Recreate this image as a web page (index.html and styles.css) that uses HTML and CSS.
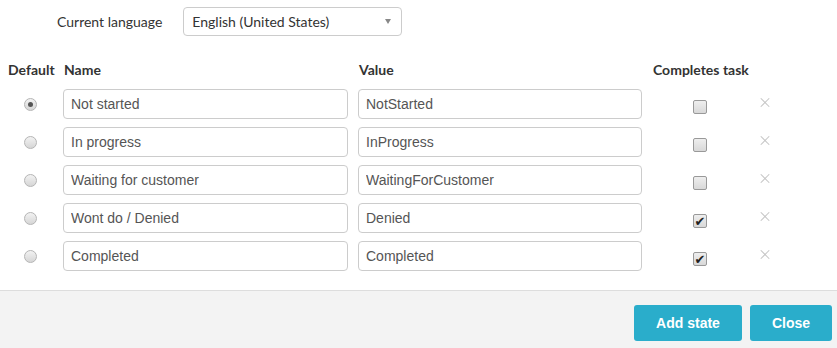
FILE: index.html
```html
<!DOCTYPE html>
<html lang="en">
<head>
    <meta charset="UTF-8">
    <title>Task states</title>
    <link rel="stylesheet" href="styles.css">
</head>
<body>
    <div class="content">
        <div class="language">
            <label class="language-label">Current language</label>
            <div class="select">
                <span>English (United States)</span>
                <span class="caret"></span>
            </div>
        </div>

        <div class="states">
            <div class="head">Default</div>
            <div class="head">Name</div>
            <div class="head">Value</div>
            <div class="head">Completes task</div>
            <div class="head"></div>

            <div class="cell center"><span class="radio checked"></span></div>
            <div class="cell"><input class="field" type="text" value="Not started"></div>
            <div class="cell"><input class="field" type="text" value="NotStarted"></div>
            <div class="cell center"><span class="check"></span></div>
            <div class="cell center"><span class="remove"></span></div>

            <div class="cell center"><span class="radio"></span></div>
            <div class="cell"><input class="field" type="text" value="In progress"></div>
            <div class="cell"><input class="field" type="text" value="InProgress"></div>
            <div class="cell center"><span class="check"></span></div>
            <div class="cell center"><span class="remove"></span></div>

            <div class="cell center"><span class="radio"></span></div>
            <div class="cell"><input class="field" type="text" value="Waiting for customer"></div>
            <div class="cell"><input class="field" type="text" value="WaitingForCustomer"></div>
            <div class="cell center"><span class="check"></span></div>
            <div class="cell center"><span class="remove"></span></div>

            <div class="cell center"><span class="radio"></span></div>
            <div class="cell"><input class="field" type="text" value="Wont do / Denied"></div>
            <div class="cell"><input class="field" type="text" value="Denied"></div>
            <div class="cell center"><span class="check checked">&#10004;</span></div>
            <div class="cell center"><span class="remove"></span></div>

            <div class="cell center"><span class="radio"></span></div>
            <div class="cell"><input class="field" type="text" value="Completed"></div>
            <div class="cell"><input class="field" type="text" value="Completed"></div>
            <div class="cell center"><span class="check checked">&#10004;</span></div>
            <div class="cell center"><span class="remove"></span></div>
        </div>
    </div>

    <div class="footer">
        <button class="btn">Add state</button>
        <button class="btn">Close</button>
    </div>
</body>
</html>
```

FILE: styles.css
```css
body {
    margin: 0;
    background-color: #fff;
    color: #333;
    font-family: 'Lato', sans-serif;
    font-size: 14px;
}
.content {
    padding: 7px 0 11px 8px;
}
.language {
    display: flex;
    align-items: center;
    padding-left: 49px;
    gap: 21px;
}
.select {
    box-sizing: border-box;
    width: 219px;
    height: 29px;
    border: 1px solid #ccc;
    border-radius: 4px;
    padding: 0 9px 0 8px;
    display: flex;
    align-items: center;
    justify-content: space-between;
    color: #333;
}
.caret {
    width: 0;
    height: 0;
    border-left: 3px solid transparent;
    border-right: 3px solid transparent;
    border-top: 5px solid #888;
    margin-right: 1px;
}
.states {
    display: grid;
    grid-template-columns: 55px 295px 294px 94px 36px;
    grid-template-rows: 36px;
    grid-auto-rows: 38px;
    margin-top: 17px;
}
.head {
    font-weight: bold;
    line-height: 34px;
    padding-left: 1px;
    white-space: nowrap;
}
.head:first-child {
    padding-left: 0;
}
.cell {
    display: flex;
    align-items: flex-start;
}
.center {
    justify-content: center;
    padding-top: 9px;
    box-sizing: border-box;
}
.field {
    box-sizing: border-box;
    width: 285px;
    height: 30px;
    margin: 0;
    padding: 0 7px;
    border: 1px solid #ccc;
    border-radius: 4px;
    font-family: 'Liberation Sans', Arial, sans-serif;
    font-size: 14px;
    color: #555;
}
.cell:nth-child(5n+3) .field {
    width: 284px;
}
.radio {
    width: 11px;
    height: 11px;
    border-radius: 50%;
    border: 1px solid #b5b5b5;
    background: linear-gradient(#f2f2f2, #d6d6d6);
    margin-top: 0;
    margin-right: 10px;
    position: relative;
}
.radio.checked::after {
    content: "";
    position: absolute;
    left: 3px;
    top: 3px;
    width: 5px;
    height: 5px;
    border-radius: 50%;
    background: #555;
}
.check {
    width: 12px;
    height: 12px;
    border: 1px solid #999;
    border-radius: 2px;
    background: linear-gradient(#eee, #d8d8d8);
    margin-top: 2px;
    margin-left: 2px;
    font-size: 13px;
    line-height: 13px;
    text-align: center;
    color: #222;
    font-family: 'DejaVu Sans', sans-serif;
    overflow: hidden;
}
.remove {
    width: 9px;
    height: 9px;
    position: relative;
    margin-top: 0;
    margin-left: 1px;
}
.remove::before,
.remove::after {
    content: "";
    position: absolute;
    left: -1px;
    top: 4px;
    width: 12px;
    height: 1px;
    background: #c4c4c4;
    transform: rotate(45deg);
}
.remove::after {
    transform: rotate(-45deg);
}
.footer {
    border-top: 1px solid #ddd;
    background-color: #f3f3f3;
    height: 58px;
    display: flex;
    justify-content: flex-end;
    align-items: flex-start;
    gap: 8px;
    padding: 14px 5px 0 0;
    box-sizing: border-box;
}
.btn {
    height: 36px;
    padding: 0 22px;
    border: none;
    border-radius: 3px;
    background-color: #2aadcb;
    color: #fff;
    font-family: 'Liberation Sans', Arial, sans-serif;
    font-weight: bold;
    font-size: 14px;
}
```
